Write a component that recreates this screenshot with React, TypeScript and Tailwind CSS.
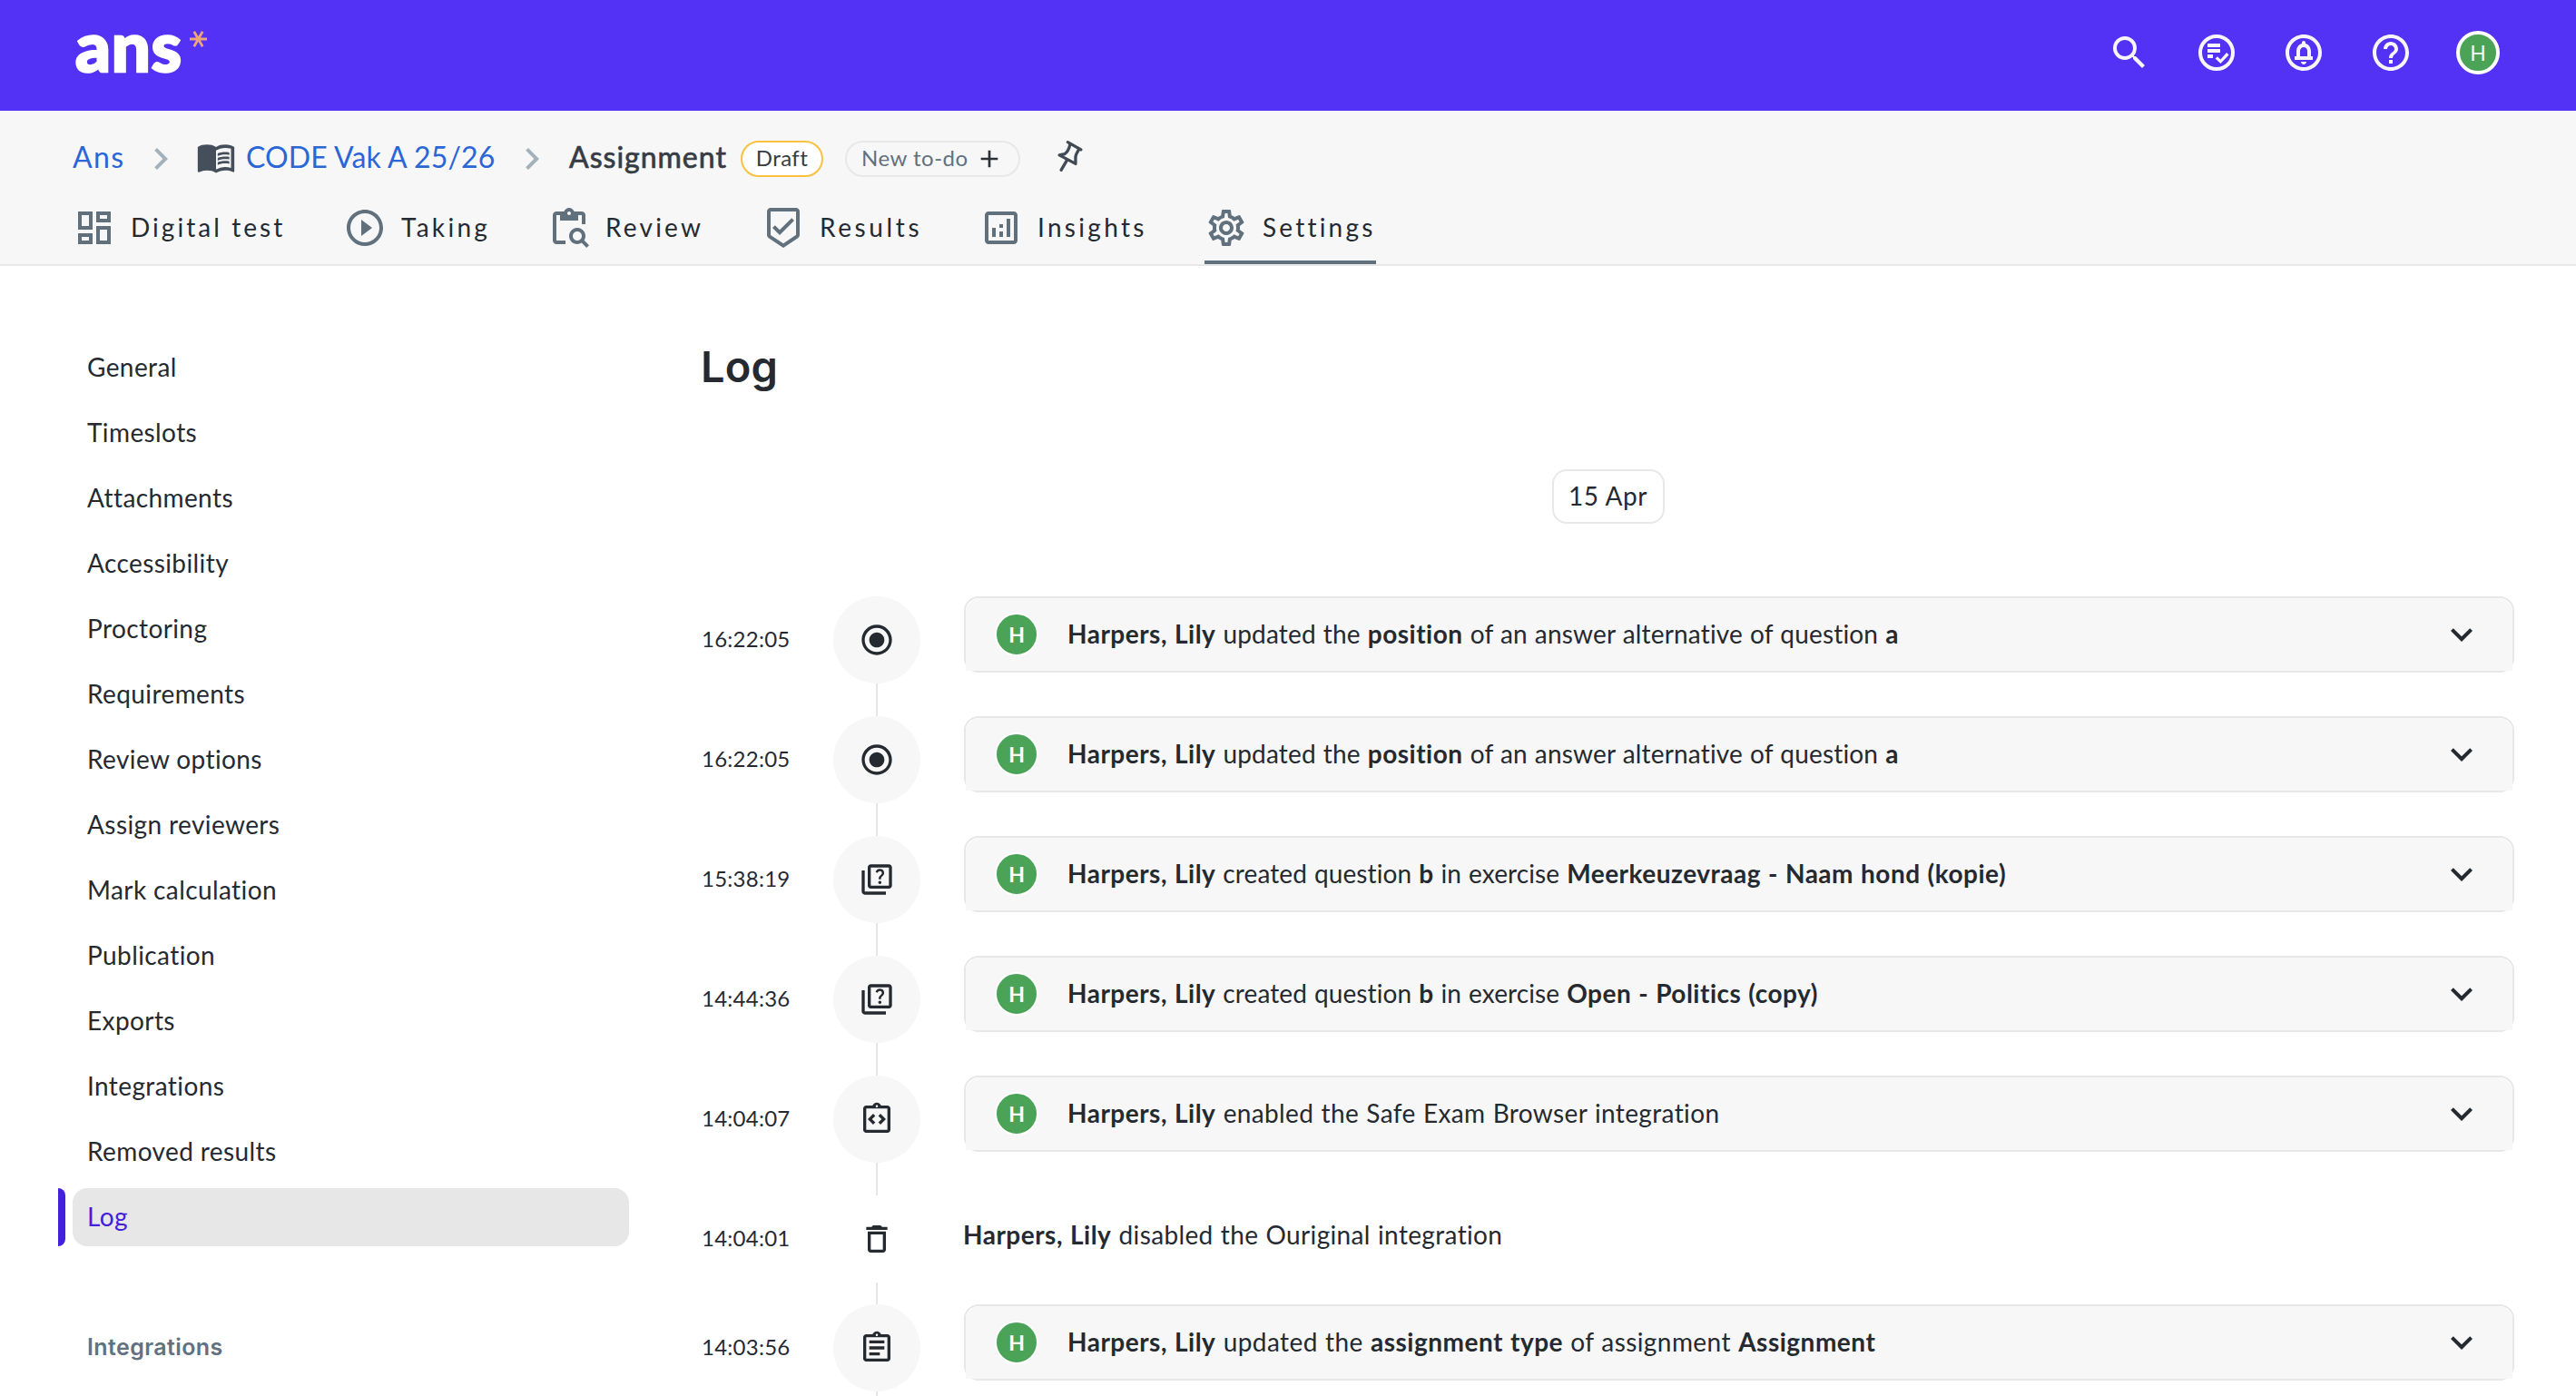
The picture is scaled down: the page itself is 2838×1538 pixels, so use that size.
import React from "react";
import {
  MdAdd,
  MdChevronRight,
  MdDeleteOutline,
  MdHelpOutline,
  MdKeyboardArrowDown,
  MdMenuBook,
  MdOutlineAnalytics,
  MdOutlineAssignment,
  MdOutlineBeenhere,
  MdOutlineCircleNotifications,
  MdOutlineContentPasteSearch,
  MdOutlineDashboard,
  MdOutlineIntegrationInstructions,
  MdOutlineQuiz,
  MdOutlineSettings,
  MdPlayCircleOutline,
  MdRadioButtonChecked,
  MdSearch,
} from "react-icons/md";

const TasksIcon = () => (
  <svg viewBox="0 0 24 24" className="size-12" fill="currentColor">
    <circle cx="12" cy="12" r="9" fill="none" stroke="currentColor" strokeWidth="2" />
    <path d="M7 7h7v2H7zM7 10h7v2H7zM7 13h3v2H7zM11.3 15.3l1.2-1.2 1.7 1.6 3.3-3.7 1.3 1.3-4.6 4.7z" />
  </svg>
);

const PinIcon = () => (
  <svg
    viewBox="0 0 96 112"
    className="h-[37px] w-8"
    fill="none"
    stroke="currentColor"
    strokeWidth="10"
    strokeLinecap="round"
    strokeLinejoin="round"
  >
    <path d="M40 11L84 36M48 18C44 34 38 46 30 50L12 54 66 83 66 62C66 52 72 44 78 34M38 70L18 104" />
  </svg>
);

const Logo = () => (
  <div className="flex items-start pl-[3px]">
    <span className="mt-[3px] text-[76px] leading-[94px] font-black tracking-[0.8px] text-white [-webkit-text-stroke:2.5px_white]">
      ans
    </span>
    <svg viewBox="0 0 19 18" className="mt-[34px] ml-[8px] h-[18px] w-[19px]" stroke="#eca57b" strokeWidth="2.8">
      <path d="M0 9H19M4.8 .8L14.2 17.2M14.2 .8L4.8 17.2" />
    </svg>
  </div>
);

const tabs = [
  { label: "Digital test", Icon: MdOutlineDashboard, box: "w-[234px]", text: "tracking-[3.05px]" },
  { label: "Taking", Icon: MdPlayCircleOutline, box: "w-[161px]", text: "tracking-[3.3px]" },
  { label: "Review", Icon: MdOutlineContentPasteSearch, box: "w-[172px]", text: "tracking-[3.2px]" },
  { label: "Results", Icon: MdOutlineBeenhere, box: "w-[176px]", text: "tracking-[3.6px]" },
  { label: "Insights", Icon: MdOutlineAnalytics, box: "w-[184px]", text: "tracking-[3.3px]" },
  { label: "Settings", Icon: MdOutlineSettings, box: "w-[189px]", text: "tracking-[3.2px]", active: true },
];

const menu = [
  "General",
  "Timeslots",
  "Attachments",
  "Accessibility",
  "Proctoring",
  "Requirements",
  "Review options",
  "Assign reviewers",
  "Mark calculation",
  "Publication",
  "Exports",
  "Integrations",
  "Removed results",
  "Log",
];

const B = ({ children }: { children: React.ReactNode }) => (
  <b className="font-bold tracking-[0.5px]">{children}</b>
);

type Entry = {
  time: string;
  Icon: React.ElementType;
  tracking: string;
  body: React.ReactNode;
  plain?: boolean;
};

const entries: Entry[] = [
  {
    time: "16:22:05",
    Icon: MdRadioButtonChecked,
    tracking: "tracking-[0.17px]",
    body: <>updated the <B>position</B> of an answer alternative of question <B>a</B></>,
  },
  {
    time: "16:22:05",
    Icon: MdRadioButtonChecked,
    tracking: "tracking-[0.17px]",
    body: <>updated the <B>position</B> of an answer alternative of question <B>a</B></>,
  },
  {
    time: "15:38:19",
    Icon: MdOutlineQuiz,
    tracking: "tracking-[0.1px]",
    body: <>created question <B>b</B> in exercise <B>Meerkeuzevraag - Naam hond (kopie)</B></>,
  },
  {
    time: "14:44:36",
    Icon: MdOutlineQuiz,
    tracking: "tracking-[0.1px]",
    body: <>created question <B>b</B> in exercise <B>Open - Politics (copy)</B></>,
  },
  {
    time: "14:04:07",
    Icon: MdOutlineIntegrationInstructions,
    tracking: "tracking-[0.37px]",
    body: <>enabled the Safe Exam Browser integration</>,
  },
  {
    time: "14:04:01",
    Icon: MdDeleteOutline,
    tracking: "tracking-[0.35px]",
    body: <>disabled the Ouriginal integration</>,
    plain: true,
  },
  {
    time: "14:03:56",
    Icon: MdOutlineAssignment,
    tracking: "tracking-[0.42px]",
    body: <>updated the <B>assignment type</B> of assignment <B>Assignment</B></>,
  },
];

const Message = ({ tracking, children }: { tracking: string; children: React.ReactNode }) => (
  <p className={`pb-[3px] text-[28px] leading-10 whitespace-nowrap [word-spacing:0.7px] ${tracking}`}>
    <B>Harpers, Lily</B> {children}
  </p>
);

export default function App() {
  return (
    <div className="flex h-[1538px] w-[2838px] flex-col overflow-hidden bg-white font-[Lato,sans-serif] text-[#252a31]">
      <header className="flex h-[122px] shrink-0 justify-between bg-[#5331f5] pr-[84px] pl-20">
        <Logo />
        <div className="mt-[34px] flex h-12 items-center gap-12 text-[#f6f6fc]">
          <MdSearch className="size-12" />
          <TasksIcon />
          <MdOutlineCircleNotifications className="size-12" />
          <MdHelpOutline className="size-12" />
          <span className="flex size-12 items-center justify-center rounded-full border-4 border-white bg-[#4aa356] text-[23px] leading-none">
            H
          </span>
        </div>
      </header>

      <div className="h-[171px] shrink-0 border-b-2 border-[#e8e8e8] bg-[#f7f7f7] pl-20">
        <div className="flex h-[106px] items-center text-[32px] leading-10">
          <span className="w-[73px] pb-1 tracking-[1.4px] text-[#2b66d6]">Ans</span>
          <MdChevronRight className="size-12 text-[#a3b1bb]" />
          <MdMenuBook className="mr-[11px] mb-[4px] ml-[15px] size-11 text-[#454f5b]" />
          <span className="w-[291px] pb-1 tracking-[0.12px] whitespace-nowrap text-[#2b66d6]">CODE Vak A 25/26</span>
          <MdChevronRight className="size-12 text-[#a3b1bb]" />
          <span className="ml-[17px] w-[189px] pb-1 tracking-[1px] text-[#363c44] [-webkit-text-stroke:0.7px_#363c44]">
            Assignment
          </span>
          <span className="flex h-10 w-[91px] shrink-0 items-center justify-center rounded-full border-2 border-[#f8c240] bg-white pb-[3px] text-[24px] tracking-[0.4px] text-[#363c44]">
            Draft
          </span>
          <span className="ml-6 flex h-10 w-[193px] shrink-0 items-center rounded-full border-2 border-[#e8e8e8] pl-[16px] text-[24px] tracking-[0.5px] text-[#61707e]">
            <span className="w-[125px] pb-[3px] whitespace-nowrap">New to-do</span>
            <MdAdd className="size-8 text-[#2b3137]" />
          </span>
          <span className="mb-[7px] ml-[39px] text-[#414a54]">
            <PinIcon />
          </span>
        </div>

        <nav className="flex h-[63px] gap-16">
          {tabs.map(({ label, Icon, box, text, active }) => (
            <div
              key={label}
              className={`flex shrink-0 gap-4 border-b-4 ${box} ${active ? "border-[#60707d]" : "border-transparent"}`}
            >
              <Icon className="-mt-px size-12 shrink-0 text-[#60707d]" />
              <span className={`text-[28px] leading-[44px] whitespace-nowrap ${text}`}>{label}</span>
            </div>
          ))}
        </nav>
      </div>

      <div className="flex flex-1 pt-20">
        <aside className="w-[773px] shrink-0 pl-16">
          <ul className="flex flex-col gap-2">
            {menu.map((m) => {
              const active = m === "Log";
              return (
                <li key={m} className="flex h-16 gap-2">
                  <span className={`w-2 rounded-r-lg ${active ? "bg-[#4320dc]" : ""}`} />
                  <span
                    className={`flex w-[613px] items-center rounded-2xl pb-[2px] pl-4 text-[28px] tracking-[0.4px] ${active ? "bg-[#e7e7e7] text-[#4320dc]" : ""}`}
                  >
                    {m}
                  </span>
                </li>
              );
            })}
          </ul>
          <h2 className="mt-[95px] pl-8 font-[Inter] text-[25px] leading-8 font-semibold tracking-[0.4px] text-[#61717f]">
            Integrations
          </h2>
          <p className="mt-[18px] pl-8 text-[28px] leading-[60px] tracking-[0.35px] text-[#a9aeb3]">
            Safe Exam Browser
          </p>
        </aside>

        <main className="w-[1997px]">
          <h1 className="-ml-px font-[Inter] text-[47px] leading-[62px] font-semibold tracking-[0.2px]">Log</h1>
          <div className="mt-[82px] flex justify-center">
            <span className="flex h-[60px] w-[124px] items-center justify-center rounded-2xl border-2 border-[#e8e8e8] pb-[3px] text-[28px] tracking-[0.6px]">
              15 Apr
            </span>
          </div>

          <div className="mt-20">
            {entries.map(({ time, Icon, tracking, body, plain }, i) => (
              <div key={i} className={`flex ${plain ? "h-[120px]" : "h-[132px]"}`}>
                <span className="flex h-24 w-[145px] items-center pb-[3px] text-[24px] tracking-[0.25px]">{time}</span>
                <div className="flex w-24 flex-col items-center">
                  <span
                    className={`flex size-24 shrink-0 items-center justify-center rounded-full ${plain ? "bg-white" : "bg-[#f7f7f7]"}`}
                  >
                    <Icon className="size-10" />
                  </span>
                  <span className="w-0.5 flex-1 bg-[#e7e7e7]" />
                </div>
                {plain ? (
                  <div className="ml-[47px] flex h-[84px] items-center pt-1">
                    <Message tracking={tracking}>{body}</Message>
                  </div>
                ) : (
                  <div className="ml-12 h-[84px] w-[1708px] rounded-2xl border-2 border-[#e7e7e7]">
                    <div className="flex h-20 items-center rounded-t-2xl bg-[#f7f7f7] px-8">
                      <span className="mr-8 flex size-12 items-center justify-center rounded-full border-2 border-white bg-[#4aa356] text-[23px] leading-none font-bold text-white">
                        H
                      </span>
                      <Message tracking={tracking}>{body}</Message>
                      <MdKeyboardArrowDown className="ml-auto size-12" />
                    </div>
                  </div>
                )}
              </div>
            ))}
          </div>
        </main>
      </div>
    </div>
  );
}
